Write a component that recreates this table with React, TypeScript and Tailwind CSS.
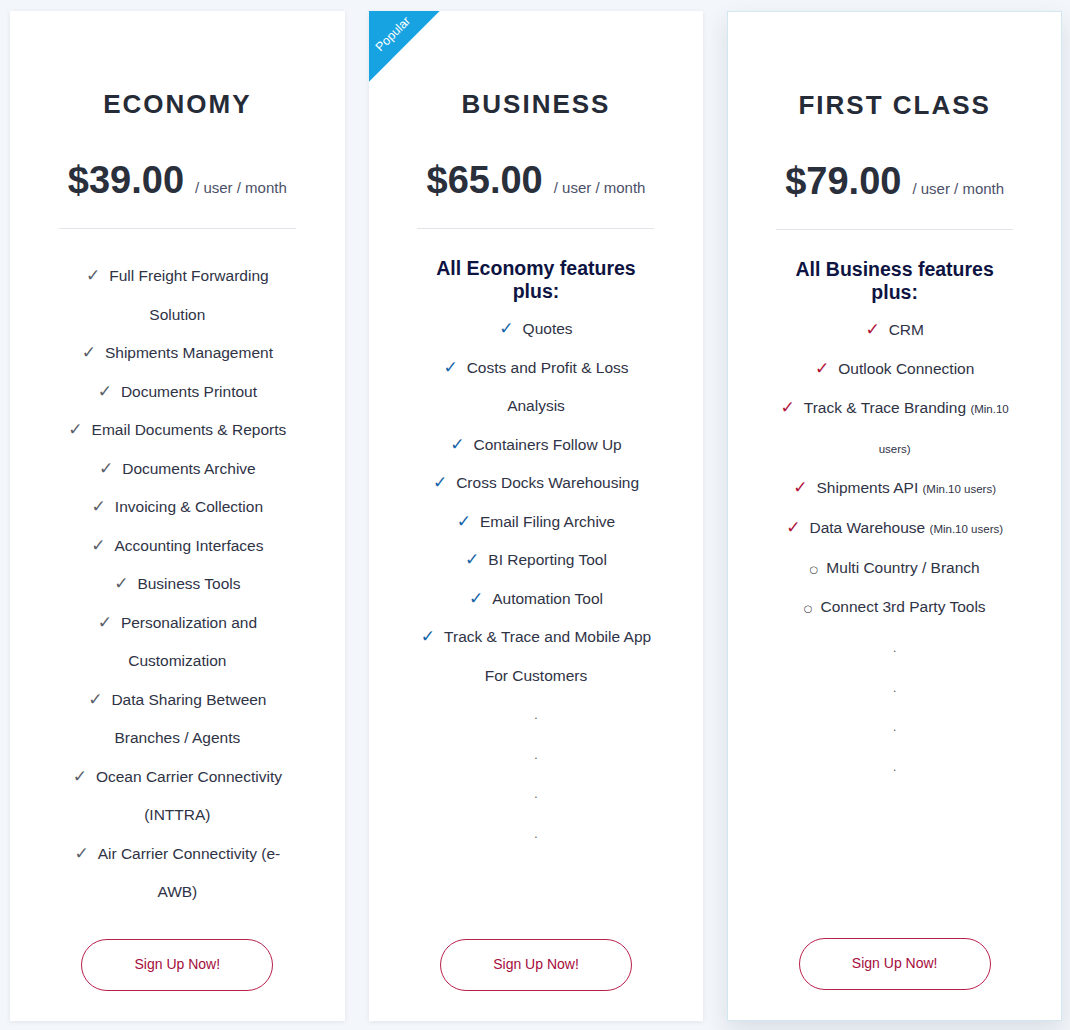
import type { ReactNode } from "react"

type Feature = { text: ReactNode; mark: "check" | "circle" | "dot"; tall?: boolean }

const economy: Feature[] = [
  { text: "Full Freight Forwarding Solution", mark: "check" },
  { text: "Shipments Management", mark: "check" },
  { text: "Documents Printout", mark: "check" },
  { text: "Email Documents & Reports", mark: "check" },
  { text: "Documents Archive", mark: "check" },
  { text: "Invoicing & Collection", mark: "check" },
  { text: "Accounting Interfaces", mark: "check" },
  { text: "Business Tools", mark: "check" },
  { text: "Personalization and Customization", mark: "check" },
  { text: "Data Sharing Between Branches / Agents", mark: "check" },
  { text: "Ocean Carrier Connectivity (INTTRA)", mark: "check" },
  { text: "Air Carrier Connectivity (e-AWB)", mark: "check" },
]

const business: Feature[] = [
  { text: "Quotes", mark: "check" },
  { text: "Costs and Profit & Loss Analysis", mark: "check" },
  { text: "Containers Follow Up", mark: "check" },
  { text: "Cross Docks Warehousing", mark: "check" },
  { text: "Email Filing Archive", mark: "check" },
  { text: "BI Reporting Tool", mark: "check" },
  { text: "Automation Tool", mark: "check" },
  { text: "Track & Trace and Mobile App For Customers", mark: "check" },
  { text: "", mark: "dot" },
  { text: "", mark: "dot" },
  { text: "", mark: "dot" },
  { text: "", mark: "dot" },
]

const small = (s: string) => <span className="text-[11.5px] leading-[20px]">{s}</span>

const firstClass: Feature[] = [
  { text: "CRM", mark: "check" },
  { text: "Outlook Connection", mark: "check" },
  { text: <>Track &amp; Trace Branding {small("(Min.10 users)")}</>, mark: "check", tall: true },
  { text: <>Shipments API {small("(Min.10 users)")}</>, mark: "check", tall: true },
  { text: <>Data Warehouse {small("(Min.10 users)")}</>, mark: "check", tall: true },
  { text: "Multi Country / Branch", mark: "circle", tall: true },
  { text: "Connect 3rd Party Tools", mark: "circle" },
  { text: "", mark: "dot", tall: true },
  { text: "", mark: "dot" },
  { text: "", mark: "dot" },
  { text: "", mark: "dot" },
]

export default function App() {
  return (
    <div className="min-h-[1030px] bg-[#f3f6fa] pl-[10px] pr-[8px] pt-[11px] font-['Liberation_Sans',Arial,sans-serif]">
      <div className="grid grid-cols-3 gap-[24px]">
        <Plan title="ECONOMY" price="$39.00" features={economy} checkClass="text-[#5a5f6a]" />
        <Plan
          title="BUSINESS"
          price="$65.00"
          heading="All Economy features plus:"
          features={business}
          checkClass="font-bold text-[#1565a8]"
          popular
        />
        <Plan
          title="FIRST CLASS"
          price="$79.00"
          heading="All Business features plus:"
          features={firstClass}
          checkClass="font-bold text-[#b0123c]"
          highlight
        />
      </div>
    </div>
  )
}

function Plan({
  title,
  price,
  heading,
  features,
  checkClass,
  popular,
  highlight,
}: {
  title: string
  price: string
  heading?: string
  features: Feature[]
  checkClass: string
  popular?: boolean
  highlight?: boolean
}) {
  return (
    <div
      className={`relative flex flex-col overflow-hidden bg-white pb-[30px] pt-[77px] ${
        highlight
          ? "border border-[#d3e7f1] shadow-[0_10px_22px_rgba(40,70,100,0.13)]"
          : "shadow-[0_1px_5px_rgba(30,50,80,0.08)]"
      }`}
    >
      {popular && (
        <>
          <div className="absolute left-0 top-0 h-[71px] w-[71px] bg-[#17a3e2] [clip-path:polygon(0_0,100%_0,0_100%)]" />
          <div className="absolute left-[-2px] top-[16px] w-[52px] -rotate-45 text-center text-[12.5px] leading-[14px] text-white">
            Popular
          </div>
        </>
      )}

      <div className="text-center text-[26px] font-bold leading-[32px] tracking-[2px] text-[#262b38]">{title}</div>

      <div className="mt-[38px] flex items-baseline justify-center gap-[11px]">
        <span className="text-[38px] font-bold leading-[44px] text-[#2a2f3c]">{price}</span>
        <span className="text-[15px] text-[#4b5068]">/ user / month</span>
      </div>

      <div className="mx-auto mt-[26px] w-[237px] border-t border-[#e1e4e9]" />

      <div className="mx-auto mt-[28px] w-[237px] flex-1 text-center text-[15.5px] text-[#2f3346]">
        {heading && (
          <div className="mb-[7px] text-[19.5px] font-bold leading-[23px] text-[#0e1442]">{heading}</div>
        )}
        <ul>
          {features.map((f, i) => (
            <li key={i} className={f.tall ? "leading-[40px]" : "leading-[38.5px]"}>
              {f.mark === "check" && (
                <span className={`mr-[9px] font-['DejaVu_Sans',sans-serif] text-[17px] leading-none ${checkClass}`}>✓</span>
              )}
              {f.mark === "circle" && (
                <span className="mr-[8px] font-['DejaVu_Sans',sans-serif] text-[10px] leading-none text-[#444]">○</span>
              )}
              {f.mark === "dot" ? <span className="text-[12px] text-[#555]">.</span> : f.text}
            </li>
          ))}
        </ul>
      </div>

      <button className="mx-auto mt-[27px] h-[52px] w-[192px] rounded-full border-[1.5px] border-[#b8204c] text-[14px] text-[#a50d3c]">
        Sign Up Now!
      </button>
    </div>
  )
}
